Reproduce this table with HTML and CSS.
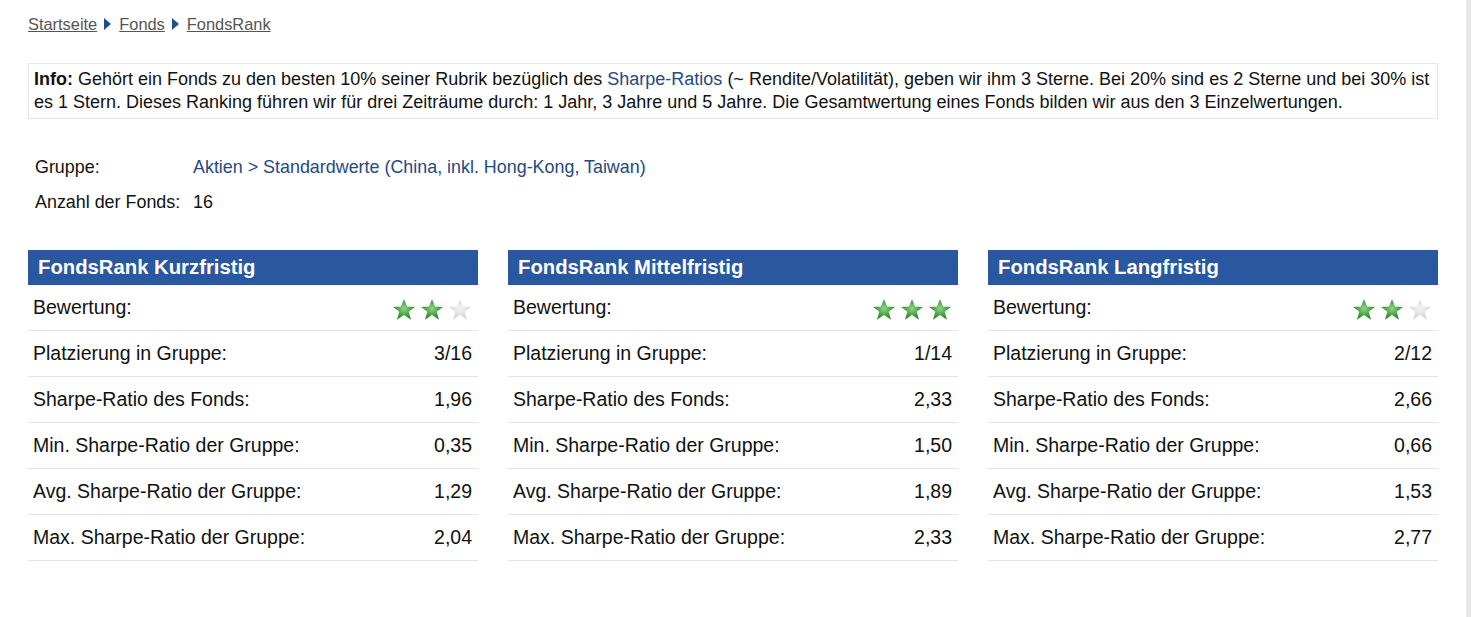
FILE: index.html
```html
<!DOCTYPE html>
<html lang="de">
<head>
<meta charset="utf-8">
<title>FondsRank</title>
<link rel="stylesheet" href="styles.css">
</head>
<body>
<svg class="defs" width="0" height="0" aria-hidden="true">
  <defs>
    <radialGradient id="gstar" cx="50%" cy="45%" r="55%">
      <stop offset="0" stop-color="#8fd48a"/>
      <stop offset="0.55" stop-color="#4fa54a"/>
      <stop offset="1" stop-color="#2f7d2e"/>
    </radialGradient>
    <radialGradient id="estar" cx="50%" cy="45%" r="55%">
      <stop offset="0" stop-color="#f4f4f4"/>
      <stop offset="1" stop-color="#d2d2d2"/>
    </radialGradient>
    <path id="starshape" d="M11 1 L13.8 7.8 L21 8.1 L15.3 12.6 L17.4 19.8 L11 15.6 L4.6 19.8 L6.7 12.6 L1 8.1 L8.2 7.8 Z"/>
  </defs>
</svg>
<div class="page">
  <div class="content">
    <nav class="crumbs">
      <a href="#">Startseite</a><span class="arrow"></span><a href="#">Fonds</a><span class="arrow"></span><a href="#">FondsRank</a>
    </nav>

    <p class="info"><b>Info:</b> Gehört ein Fonds zu den besten 10% seiner Rubrik bezüglich des <a href="#" class="link">Sharpe-Ratios</a> (~ Rendite/Volatilität), geben wir ihm 3 Sterne. Bei 20% sind es 2 Sterne und bei 30% ist es 1 Stern. Dieses Ranking führen wir für drei Zeiträume durch: 1 Jahr, 3 Jahre und 5 Jahre. Die Gesamtwertung eines Fonds bilden wir aus den 3 Einzelwertungen.</p>

    <div class="group">
      <div class="glabel">Gruppe:</div>
      <div class="gvalue"><a href="#" class="link">Aktien &gt; Standardwerte (China, inkl. Hong-Kong, Taiwan)</a></div>
      <div class="glabel">Anzahl der Fonds:</div>
      <div class="gvalue">16</div>
    </div>

    <div class="ranks">
      <section class="rank">
        <h2 class="rhead">FondsRank Kurzfristig</h2>
        <div class="row"><span>Bewertung:</span><span class="stars">
          <svg viewBox="0 0 22 21"><use href="#starshape" fill="url(#gstar)"/></svg><svg viewBox="0 0 22 21"><use href="#starshape" fill="url(#gstar)"/></svg><svg viewBox="0 0 22 21"><use href="#starshape" fill="url(#estar)"/></svg>
        </span></div>
        <div class="row"><span>Platzierung in Gruppe:</span><span>3/16</span></div>
        <div class="row"><span>Sharpe-Ratio des Fonds:</span><span>1,96</span></div>
        <div class="row"><span>Min. Sharpe-Ratio der Gruppe:</span><span>0,35</span></div>
        <div class="row"><span>Avg. Sharpe-Ratio der Gruppe:</span><span>1,29</span></div>
        <div class="row"><span>Max. Sharpe-Ratio der Gruppe:</span><span>2,04</span></div>
      </section>
      <section class="rank">
        <h2 class="rhead">FondsRank Mittelfristig</h2>
        <div class="row"><span>Bewertung:</span><span class="stars">
          <svg viewBox="0 0 22 21"><use href="#starshape" fill="url(#gstar)"/></svg><svg viewBox="0 0 22 21"><use href="#starshape" fill="url(#gstar)"/></svg><svg viewBox="0 0 22 21"><use href="#starshape" fill="url(#gstar)"/></svg>
        </span></div>
        <div class="row"><span>Platzierung in Gruppe:</span><span>1/14</span></div>
        <div class="row"><span>Sharpe-Ratio des Fonds:</span><span>2,33</span></div>
        <div class="row"><span>Min. Sharpe-Ratio der Gruppe:</span><span>1,50</span></div>
        <div class="row"><span>Avg. Sharpe-Ratio der Gruppe:</span><span>1,89</span></div>
        <div class="row"><span>Max. Sharpe-Ratio der Gruppe:</span><span>2,33</span></div>
      </section>
      <section class="rank">
        <h2 class="rhead">FondsRank Langfristig</h2>
        <div class="row"><span>Bewertung:</span><span class="stars">
          <svg viewBox="0 0 22 21"><use href="#starshape" fill="url(#gstar)"/></svg><svg viewBox="0 0 22 21"><use href="#starshape" fill="url(#gstar)"/></svg><svg viewBox="0 0 22 21"><use href="#starshape" fill="url(#estar)"/></svg>
        </span></div>
        <div class="row"><span>Platzierung in Gruppe:</span><span>2/12</span></div>
        <div class="row"><span>Sharpe-Ratio des Fonds:</span><span>2,66</span></div>
        <div class="row"><span>Min. Sharpe-Ratio der Gruppe:</span><span>0,66</span></div>
        <div class="row"><span>Avg. Sharpe-Ratio der Gruppe:</span><span>1,53</span></div>
        <div class="row"><span>Max. Sharpe-Ratio der Gruppe:</span><span>2,77</span></div>
      </section>
    </div>
  </div>
  <div class="scrolltrack"></div>
</div>
</body>
</html>
```

FILE: styles.css
```css
html, body {
  margin: 0;
  padding: 0;
  background: #fff;
}
body {
  font-family: "Liberation Sans", Arial, sans-serif;
  color: #111;
  overflow: hidden;
}
.defs {
  position: absolute;
  width: 0;
  height: 0;
}
.page {
  display: flex;
  min-height: 100vh;
}
.content {
  flex: 1;
  padding: 0 28px;
}
.scrolltrack {
  width: 5px;
  background: #e8e8e8;
}
.crumbs {
  padding-top: 14px;
  height: 20px;
  line-height: 20px;
  font-size: 16.4px;
  display: flex;
  align-items: center;
}
.crumbs a {
  color: #555;
  text-decoration: underline;
}
.arrow {
  display: inline-block;
  width: 0;
  height: 0;
  border-top: 6px solid transparent;
  border-bottom: 6px solid transparent;
  border-left: 7px solid #1f4f91;
  margin: 0 8px 0 7px;
}
.info {
  margin: 29px 0 0;
  border: 1px solid #e6e6e6;
  padding: 4px 5px;
  font-size: 18px;
  line-height: 23px;
  color: #111;
}
.link {
  color: #244a80;
  text-decoration: none;
}
.group {
  margin-top: 31px;
  display: grid;
  grid-template-columns: 158px auto;
  grid-auto-rows: 35px;
  align-items: center;
  padding-left: 7px;
  font-size: 17.9px;
}
.ranks {
  margin-top: 30px;
  display: grid;
  grid-template-columns: repeat(3, 450px);
  column-gap: 30px;
}
.rhead {
  margin: 0;
  height: 35px;
  line-height: 35px;
  background: #2957a0;
  color: #fff;
  font-size: 20.3px;
  font-weight: bold;
  padding-left: 10px;
}
.row {
  height: 45px;
  border-bottom: 1px solid #e3e3e3;
  display: flex;
  justify-content: space-between;
  align-items: center;
  padding: 0 6px 0 5px;
  font-size: 19.5px;
}
.stars {
  display: flex;
  gap: 4px;
  margin-top: 4px;
}
.stars svg {
  width: 24px;
  height: 23px;
  display: block;
}
```
